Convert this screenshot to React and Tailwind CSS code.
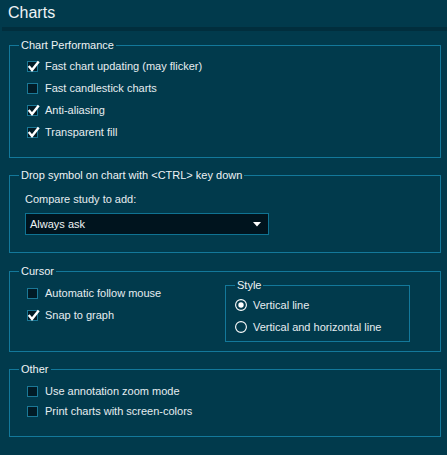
import React from "react";

const BORDER = "border-[#13789a]";

function CheckBox({ checked }) {
  return (
    <div className="relative w-[11px] h-[11px] shrink-0 border border-[#1b7896] bg-[#011b26]">
      {checked && (
        <svg className="absolute left-[-1px] top-[-2px]" width="13" height="13" viewBox="0 0 13 13">
          <path d="M2.5 7 L5 10 L11 2.5" fill="none" stroke="#ffffff" strokeWidth="2.4" strokeLinecap="square" strokeLinejoin="miter" />
        </svg>
      )}
    </div>
  );
}

function CheckRow({ checked, label, h = "h-[22px]" }) {
  return (
    <div className={`flex items-center ${h}`}>
      <CheckBox checked={checked} />
      <span className="ml-[7px] whitespace-nowrap">{label}</span>
    </div>
  );
}

function RadioRow({ checked, label }) {
  return (
    <div className="flex items-center h-[22px]">
      <svg width="12" height="12" viewBox="0 0 12 12" className="shrink-0">
        <circle cx="6" cy="6" r="5.4" fill="none" stroke="#ffffff" strokeWidth="1.1" />
        {checked && <circle cx="6" cy="6" r="2.7" fill="#ffffff" />}
      </svg>
      <span className="ml-[6px] whitespace-nowrap">{label}</span>
    </div>
  );
}

function Legend({ children }) {
  return (
    <legend className="ml-[9px] px-[2px] text-[11px] leading-[14px] text-[#eef3f5]">{children}</legend>
  );
}

export default function App() {
  return (
    <div className="w-[447px] h-[455px] bg-[#013a4c] text-[#e6edf0] text-[11px] leading-[14px] font-['Liberation_Sans',Arial,sans-serif] overflow-hidden">
      <div className="h-[27px] pl-[8px] text-[16px] leading-[25px] text-[#eef3f5]">Charts</div>
      <div className="h-[4px] ml-[2px] bg-[#012e3d]" />
      <div className="ml-[9px] mr-[6px] pt-[7px]">
        <fieldset className={`border ${BORDER}`}>
          <Legend>Chart Performance</Legend>
          <div className="pt-[3px] pb-[14px] pl-[17px]">
            <CheckRow checked label="Fast chart updating (may flicker)" />
            <CheckRow label="Fast candlestick charts" />
            <CheckRow checked label="Anti-aliasing" />
            <CheckRow checked label="Transparent fill" />
          </div>
        </fieldset>

        <fieldset className={`mt-[10px] border ${BORDER}`}>
          <Legend>Drop symbol on chart with &lt;CTRL&gt; key down</Legend>
          <div className="pt-[10px] pb-[17px] pl-[15px]">
            <div>Compare study to add:</div>
            <div className="mt-[7px] w-[244px] h-[22px] border border-[#0f7393] bg-[#00141e] flex items-center justify-between pl-[4px] pr-[7px] text-[#eef3f5]">
              <span>Always ask</span>
              <svg width="8" height="5" viewBox="0 0 8 5">
                <path d="M0 0 L8 0 L4 4.5 Z" fill="#ffffff" />
              </svg>
            </div>
          </div>
        </fieldset>

        <fieldset className={`mt-[11px] border ${BORDER}`}>
          <Legend>Cursor</Legend>
          <div className="flex items-start pb-[9px]">
            <div className="w-[215px] pl-[17px] pt-[4px]">
              <CheckRow label="Automatic follow mouse" />
              <CheckRow checked label="Snap to graph" />
            </div>
            <fieldset className={`w-[185px] border ${BORDER}`}>
              <Legend>Style</Legend>
              <div className="pt-[2px] pb-[3px] pl-[9px]">
                <RadioRow checked label="Vertical line" />
                <RadioRow label="Vertical and horizontal line" />
              </div>
            </fieldset>
          </div>
        </fieldset>

        <fieldset className={`mt-[10px] border ${BORDER}`}>
          <Legend>Other</Legend>
          <div className="pt-[5px] pb-[15px] pl-[17px]">
            <CheckRow h="h-[20px]" label="Use annotation zoom mode" />
            <CheckRow h="h-[20px]" label="Print charts with screen-colors" />
          </div>
        </fieldset>
      </div>
    </div>
  );
}
